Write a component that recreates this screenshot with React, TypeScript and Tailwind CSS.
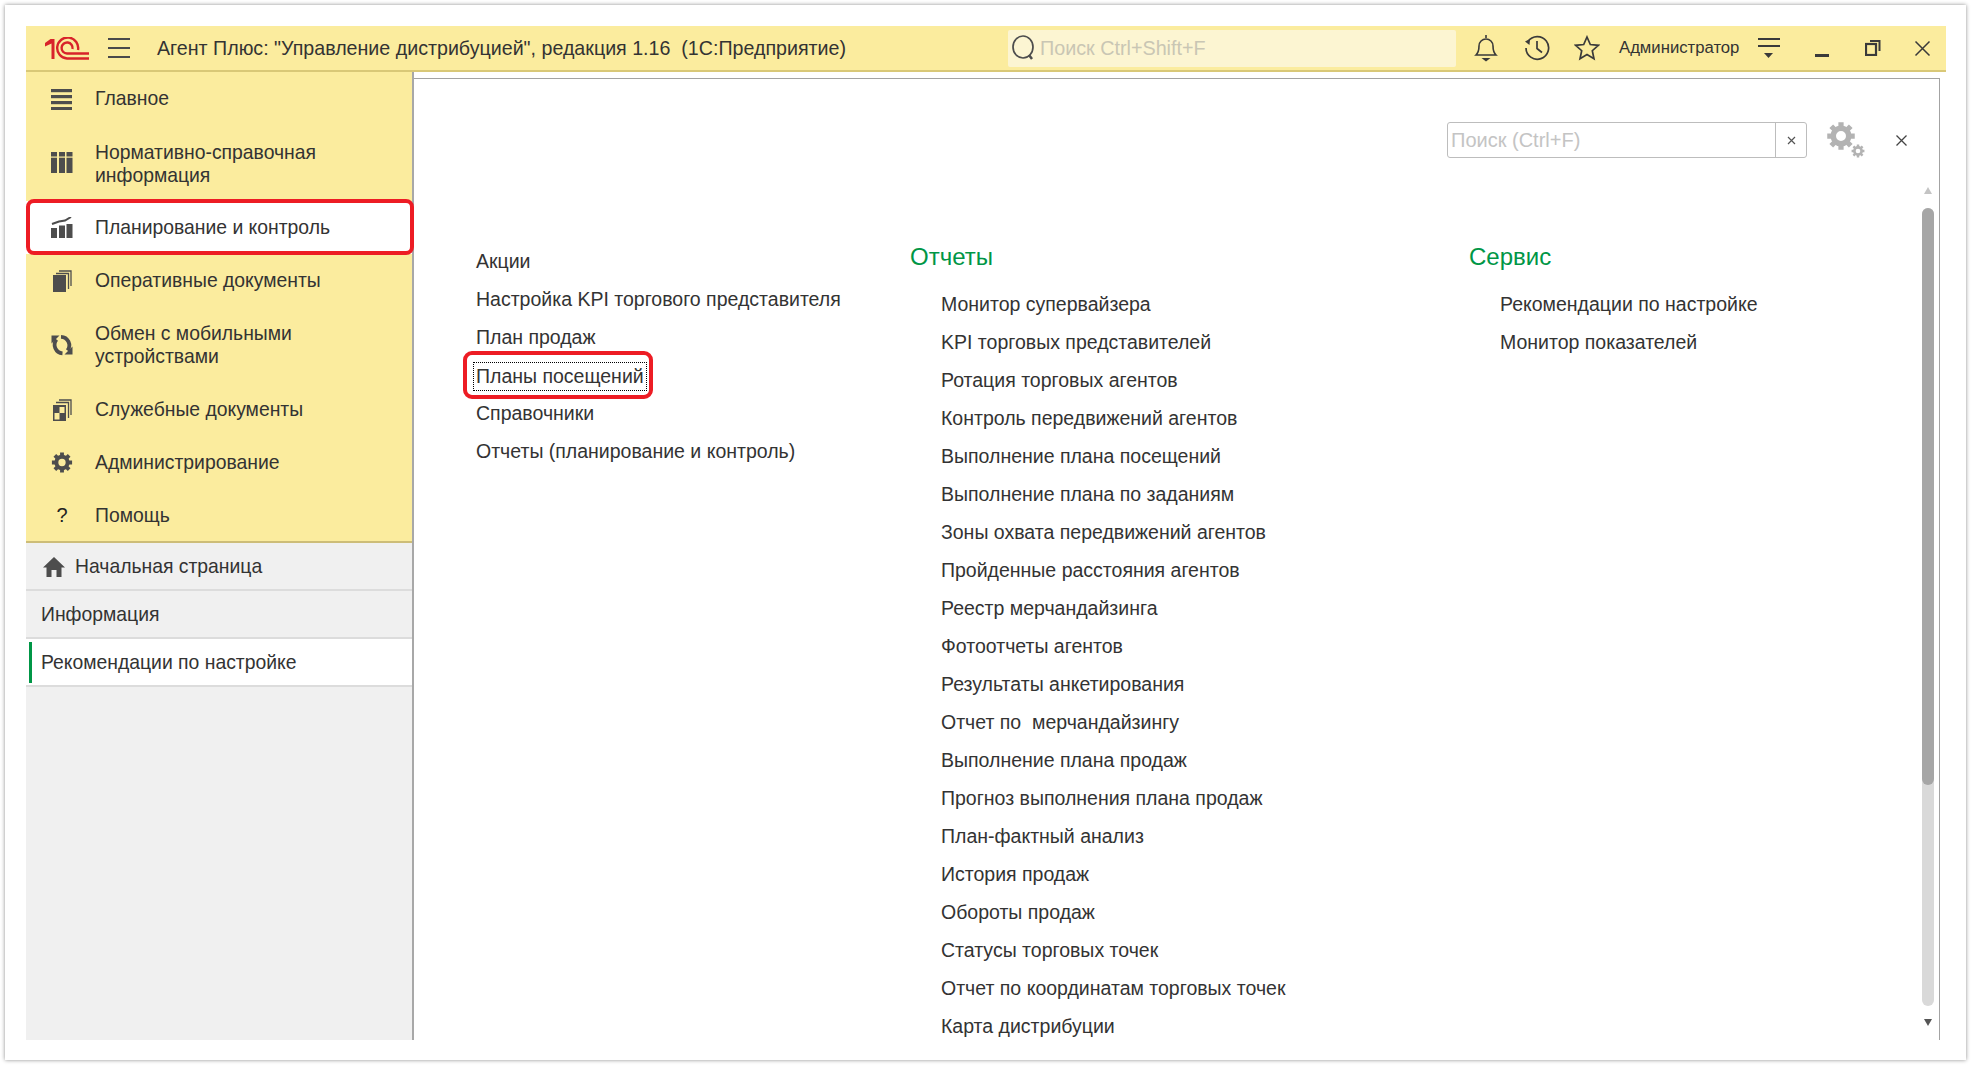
const sideItems = [
  { icon: "list", label: "Главное" },
  { icon: "book", label: "Нормативно-справочная\nинформация" },
  { icon: "chart", label: "Планирование и контроль", active: true },
  { icon: "docs", label: "Оперативные документы" },
  { icon: "sync", label: "Обмен с мобильными\nустройствами" },
  { icon: "service", label: "Служебные документы" },
  { icon: "gear", label: "Администрирование" },
  { icon: "help", label: "Помощь" },
];

const leftLinks = [
  "Акции",
  "Настройка KPI торгового представителя",
  "План продаж",
  "Планы посещений",
  "Справочники",
  "Отчеты (планирование и контроль)",
];

const reports = [
  "Монитор супервайзера",
  "KPI торговых представителей",
  "Ротация торговых агентов",
  "Контроль передвижений агентов",
  "Выполнение плана посещений",
  "Выполнение плана по заданиям",
  "Зоны охвата передвижений агентов",
  "Пройденные расстояния агентов",
  "Реестр мерчандайзинга",
  "Фотоотчеты агентов",
  "Результаты анкетирования",
  "Отчет по  мерчандайзингу",
  "Выполнение плана продаж",
  "Прогноз выполнения плана продаж",
  "План-фактный анализ",
  "История продаж",
  "Обороты продаж",
  "Статусы торговых точек",
  "Отчет по координатам торговых точек",
  "Карта дистрибуции",
];

const service = ["Рекомендации по настройке", "Монитор показателей"];

function Logo() {
  return (
    <svg width="44" height="23" viewBox="0 0 44 23" fill="none" stroke="#d8232a" strokeWidth="2.4">
      <path d="M0 6 L5.5 2 H9.500 V22 H6.500 V6.500 L0 9.500 Z" fill="#d8232a" stroke="none" />
      <path d="M33 13 A10.500 10.500 0 1 0 22 21.500 H44" />
      <path d="M27.500 12 A5.500 5.500 0 1 0 22 16.500 H44" />
    </svg>
  );
}

function Gear({ size, color, className }: { size: number; color: string; className?: string }) {
  return (
    <svg width={size} height={size} viewBox="0 0 24 24" fill="none" className={className}>
      <circle cx="12" cy="12" r="6.200" stroke={color} strokeWidth="4.400" />
      <g stroke={color} strokeWidth="4.200">
        <path d="M12 1v5M12 18v5M1 12h5M18 12h5M4.200 4.200l3.600 3.600M16.200 16.200l3.600 3.600M19.800 4.200l-3.600 3.600M7.800 16.200l-3.600 3.600" />
      </g>
    </svg>
  );
}

function SideIcon({ name }: { name: string }) {
  const c = "#4d4d4d";
  if (name === "list")
    return (
      <svg width="22" height="22" viewBox="0 0 22 22" fill={c}>
        <rect x="0" y="1" width="21" height="3.200" />
        <rect x="0" y="7" width="21" height="3.200" />
        <rect x="0" y="13" width="21" height="3.200" />
        <rect x="0" y="19" width="21" height="3" />
      </svg>
    );
  if (name === "book")
    return (
      <svg width="22" height="22" viewBox="0 0 22 22" fill={c}>
        <rect x="0" y="0" width="6" height="21" />
        <rect x="8" y="0" width="6" height="21" />
        <rect x="15.500" y="0" width="6" height="21" />
        <rect x="0" y="4.500" width="22" height="1.200" fill="#fbec9e" />
      </svg>
    );
  if (name === "chart")
    return (
      <svg width="22" height="22" viewBox="0 0 22 22" fill={c}>
        <rect x="0" y="11" width="6" height="10" />
        <rect x="8" y="8.500" width="6" height="12.500" />
        <rect x="15.500" y="7" width="6" height="14" />
        <path d="M1 7 L8 4.500 L14 3.500 L20 0" stroke={c} strokeWidth="2" fill="none" />
      </svg>
    );
  if (name === "docs")
    return (
      <svg width="22" height="22" viewBox="0 0 22 22" fill="none" stroke={c} strokeWidth="1.300">
        <rect x="2" y="5" width="13" height="17" fill={c} stroke="none" />
        <path d="M5 3.500 H17.500 V19" />
        <path d="M8 1 H20 V16" />
      </svg>
    );
  if (name === "service")
    return (
      <svg width="22" height="22" viewBox="0 0 22 22" fill="none" stroke={c} strokeWidth="1.300">
        <rect x="2" y="6" width="13" height="16" fill={c} stroke="none" />
        <rect x="8.500" y="8" width="5" height="6" fill="#fbec9e" stroke="none" />
        <rect x="3.500" y="14" width="5" height="6.500" fill="#fbec9e" stroke="none" />
        <path d="M5 3.500 H17.500 V19" />
        <path d="M8 1 H20 V16" />
      </svg>
    );
  if (name === "sync")
    return (
      <svg width="22" height="22" viewBox="0 0 22 22" fill="none" stroke={c} strokeWidth="3.800">
        <path d="M10 2.800 A8.500 8.500 0 0 1 16.500 16.500" />
        <path d="M21.500 20.500 V12.500 H21.500 L13.500 20.500 Z" fill={c} stroke="none" />
        <path d="M11.500 19.300 A8.500 8.500 0 0 1 5.500 5.500" />
        <path d="M.5 1.500 V9.500 L8.500 1.500 Z" fill={c} stroke="none" />
      </svg>
    );
  if (name === "gear") return <Gear size={23} color={c} />;
  return <span className="text-[20px] leading-none text-[#222]">?</span>;
}

function HeaderIcons() {
  const c = "#3a3a3a";
  return (
    <div className="flex h-full items-center">
      <svg width="24" height="28" viewBox="0 0 24 28" fill="none" stroke={c} strokeWidth="1.600" className="ml-[18px]">
        <path d="M12 1v3M2 21c2.500-2.500 3-5 3-9a7 7 0 0 1 14 0c0 4 .5 6.500 3 9Z" />
        <path d="M7.500 24h9l-4.500 3.500Z" fill={c} stroke="none" />
      </svg>
      <svg width="26" height="26" viewBox="0 0 26 26" fill="none" stroke={c} strokeWidth="1.700" className="ml-[26px]">
        <path d="M4 6.500A11.300 11.300 0 1 1 2 13" />
        <path d="M1 6.500l5-2.500-.5 6Z" fill={c} stroke="none" />
        <path d="M13 6v7.500l5 4" />
      </svg>
      <svg width="26" height="26" viewBox="0 0 26 26" fill="none" stroke={c} strokeWidth="1.700" className="ml-[24px]">
        <path d="M13 2l3.300 7.500 8 .8-6 5.400 1.700 8L13 19.600l-7 4.100 1.700-8-6-5.400 8-.8Z" />
      </svg>
      <span className="ml-[19px] w-[121px] whitespace-nowrap text-[16.700px] text-[#333]">Администратор</span>
      <svg width="24" height="26" viewBox="0 0 24 26" fill={c} className="ml-[17px]">
        <rect x="1" y="3" width="22" height="2" />
        <rect x="1" y="10" width="22" height="2" />
        <path d="M7 18h9l-4.500 5Z" />
      </svg>
      <div className="ml-[34px] mt-[14px] h-[3px] w-[14px] bg-[#3a3a3a]" />
      <svg width="16" height="16" viewBox="0 0 16 16" fill="none" stroke={c} strokeWidth="1.700" className="ml-[36px]">
        <rect x="1" y="4" width="10" height="11" strokeWidth="2.200" />
        <path d="M5 1h9.500v10" strokeWidth="2" />
      </svg>
      <svg width="17" height="17" viewBox="0 0 17 17" fill="none" stroke={c} strokeWidth="1.500" className="ml-[33px]">
        <path d="M1.500 1.500l14 14M15.500 1.500l-14 14" />
      </svg>
    </div>
  );
}

export default function App() {
  return (
    <div className="h-[1066px] w-[1972px] overflow-hidden bg-white p-[5px_6px_6px_5px] font-['Liberation_Sans',Arial,sans-serif] text-[19.500px] text-[#333]">
      <div className="h-full w-full bg-white px-[21px] pb-[20px] pt-[21px] shadow-[0_0_4px_rgba(0,0,0,0.45)]">
        <div className="flex h-full w-[1920px] flex-col">
          {/* title bar */}
          <header className="flex h-[46px] shrink-0 items-center border-b-2 border-[#d9c877] bg-[#fbec9e]">
            <div className="ml-[19px] w-[44px]">
              <Logo />
            </div>
            <div className="ml-[19px] flex w-[22px] flex-col gap-[7px]">
              <div className="h-[2px] bg-[#4a4a4a]" />
              <div className="h-[2px] bg-[#4a4a4a]" />
              <div className="h-[2px] bg-[#4a4a4a]" />
            </div>
            <div className="ml-[27px] w-[851px] whitespace-pre pt-[2px] text-[19.650px]">
              Агент Плюс: "Управление дистрибуцией", редакция 1.16  (1С:Предприятие)
            </div>
            <div className="flex h-[37px] w-[448px] items-center rounded-[2px] bg-[#fcf5d2] pl-[3px] text-[19.750px] text-[#c9c6b4]">
              <svg width="26" height="28" viewBox="0 0 26 28" fill="none" stroke="#4d4d4d" strokeWidth="1.700">
                <ellipse cx="12" cy="13" rx="10" ry="11" />
                <path d="M18 21l3 4" strokeWidth="2.500" />
              </svg>
              <span className="ml-[3px] pt-[2px]">Поиск Ctrl+Shift+F</span>
            </div>
            <HeaderIcons />
          </header>

          <div className="flex min-h-0 flex-1">
            {/* left panel */}
            <aside className="flex w-[388px] shrink-0 flex-col border-r-2 border-[#a8a8a8] bg-[#f0f0f0] text-[19.350px]">
              <nav className="border-b-2 border-[#cdbd78] bg-[#fbec9e]">
                {sideItems.map((item) => (
                  <div
                    key={item.label}
                    className={`relative flex items-center pl-[25px] ${item.label.includes("\n") ? "h-[76px]" : item.label === "Помощь" ? "h-[52px]" : "h-[53px]"} ${item.active ? "bg-white" : ""}`}
                  >
                    <div className="flex w-[22px] justify-center">
                      <SideIcon name={item.icon} />
                    </div>
                    <div className={`ml-[22px] whitespace-pre-line leading-[23px] ${item.label.startsWith("Нормативно") ? "pt-[2px]" : ""}`}>{item.label}</div>
                    {item.active && (
                      <div className="absolute -bottom-[1px] -right-[2px] -top-[2px] left-0 rounded-[8px] border-4 border-[#ed1c24]" />
                    )}
                  </div>
                ))}
              </nav>
              <div className="flex h-[48px] items-center gap-[10px] border-b-2 border-[#dcdcdc] pl-[17px] pt-[2px]">
                <svg width="22" height="20" viewBox="0 0 22 20" fill="#4d4d4d">
                  <path d="M11 0 L22 10.500 H18.500 V20 H13.500 V13 H8.500 V20 H3.500 V10.500 H0 Z" />
                </svg>
                <span>Начальная страница</span>
              </div>
              <div className="flex h-[48px] items-center border-b-2 border-[#dcdcdc] pl-[15px] pt-[2px]">Информация</div>
              <div className="flex h-[48px] items-center border-b-2 border-[#dcdcdc] bg-white pl-[3px]">
                <div className="h-[41px] w-[3px] bg-[#009646]" />
                <span className="ml-[9px] pt-[2px]">Рекомендации по настройке</span>
              </div>
            </aside>

            {/* section panel */}
            <main className="mt-[6px] flex w-[1526px] flex-col border-r border-t border-[#a3a3a3] bg-white">
              <div className="flex h-[79px] items-end">
                <div className="ml-[1033px] flex h-[36px] w-[360px] items-center rounded-[3px] border border-[#bdbdbd] text-[20px] text-[#c4c4c4]">
                  <span className="ml-[3px] flex-1">Поиск (Ctrl+F)</span>
                  <div className="flex h-full w-[31px] items-center justify-center border-l border-[#bdbdbd]">
                    <svg width="9" height="9" viewBox="0 0 9 9" stroke="#555" strokeWidth="1.200">
                      <path d="M1 1l7 7M8 1l-7 7" />
                    </svg>
                  </div>
                </div>
                <div className="relative ml-[19px] h-[37px] w-[40px]">
                  <Gear size={30} color="#b3b3b3" />
                  <Gear size={14} color="#b3b3b3" className="absolute bottom-0 right-[1px]" />
                </div>
                <svg width="11" height="11" viewBox="0 0 11 11" stroke="#444" strokeWidth="1.300" className="mb-[12px] ml-[30px]">
                  <path d="M.5.500l10 10M10.500.500l-10 10" />
                </svg>
              </div>

              <div className="flex min-h-0 flex-1">
                <div className="flex min-w-0 flex-1 overflow-hidden pl-[62px] pt-[84px]">
                  <div className="w-[434px] shrink-0 pt-[1px]">
                    {leftLinks.map((link) => (
                      <div key={link} className="relative flex h-[38px] items-center whitespace-pre">
                        {link === "Планы посещений" ? (
                          <>
                            <span className="-ml-[3px] border border-dotted border-black px-[2px] leading-[27px]">{link}</span>
                            <div className="absolute -left-[13px] top-[-6px] h-[48px] w-[190px] rounded-[9px] border-4 border-[#ed1c24]" />
                          </>
                        ) : (
                          link
                        )}
                      </div>
                    ))}
                  </div>
                  <div className="w-[559px] shrink-0">
                    <div className="h-[30px] text-[24px] leading-[30px] text-[#009646]">Отчеты</div>
                    <div className="ml-[31px] mt-[14px]">
                      {reports.map((r) => (
                        <div key={r} className="flex h-[38px] items-center whitespace-pre">
                          {r}
                        </div>
                      ))}
                    </div>
                  </div>
                  <div className="flex-1">
                    <div className="h-[30px] text-[24px] leading-[30px] text-[#009646]">Сервис</div>
                    <div className="ml-[31px] mt-[14px]">
                      {service.map((r) => (
                        <div key={r} className="flex h-[38px] items-center whitespace-pre">
                          {r}
                        </div>
                      ))}
                    </div>
                  </div>
                </div>

                {/* scrollbar */}
                <div className="mr-[5px] flex w-[12px] shrink-0 flex-col items-center pt-[29px]">
                  <div className="h-0 w-0 border-x-[4px] border-b-[7px] border-x-transparent border-b-[#c4c4c4]" />
                  <div className="mt-[14px] flex h-[798px] w-[12px] flex-col rounded-[6px] bg-[#d9d9d9]">
                    <div className="h-[577px] rounded-[6px] bg-[#a6a6a6]" />
                  </div>
                  <div className="mt-[13px] h-0 w-0 border-x-[4px] border-t-[7px] border-x-transparent border-t-[#555]" />
                </div>
              </div>
            </main>
          </div>
        </div>
      </div>
    </div>
  );
}
